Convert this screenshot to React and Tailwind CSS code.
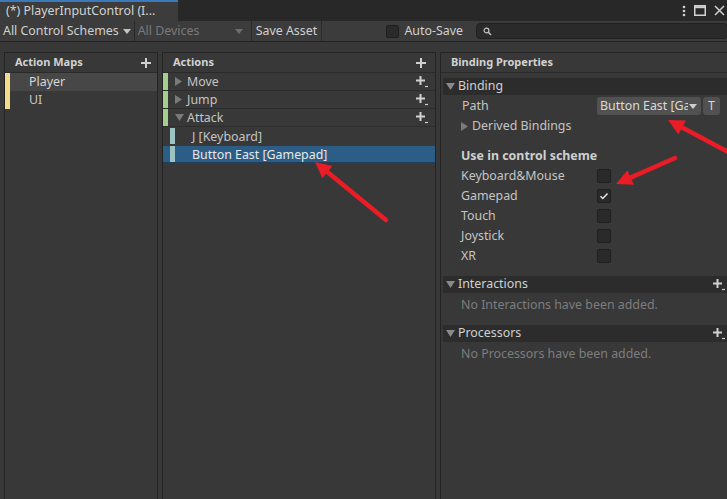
import React from 'react';

// little "+" with a dropdown notch, used on action rows and section headers
const PlusMenu = () => (
  <svg width="14" height="14" viewBox="0 0 14 14" className="shrink-0">
    <path d="M5.5 1v9M1 5.5h9" stroke="#d0d0d0" strokeWidth="2" />
    <path d="M10 11.5h3" stroke="#d0d0d0" strokeWidth="1.2" />
  </svg>
);

const Plus = () => (
  <svg width="12" height="12" viewBox="0 0 12 12" className="shrink-0">
    <path d="M6 1v10M1 6h10" stroke="#d0d0d0" strokeWidth="2" />
  </svg>
);

const TriRight = () => (
  <svg width="7" height="9" viewBox="0 0 7 9" className="shrink-0">
    <path d="M0 0l7 4.5L0 9z" fill="#7a7a7a" />
  </svg>
);

const TriDown = ({ color = '#7a7a7a' }) => (
  <svg width="9" height="7" viewBox="0 0 9 7" className="shrink-0">
    <path d="M0 0h9L4.5 7z" fill={color} />
  </svg>
);

const Check = ({ checked }) => (
  <div className="w-[14px] h-[14px] rounded-[2px] bg-[#2a2a2a] border border-[#1f1f1f] flex items-center justify-center">
    {checked && (
      <svg width="10" height="10" viewBox="0 0 10 10">
        <path d="M1.5 5.2l2.3 2.3L8.5 2.5" stroke="#e6e6e6" strokeWidth="1.5" fill="none" />
      </svg>
    )}
  </div>
);

// red annotation arrow (tail -> tip)
const Arrow = ({ x1, y1, x2, y2 }) => {
  const dx = x2 - x1, dy = y2 - y1;
  const len = Math.hypot(dx, dy);
  const ux = dx / len, uy = dy / len;
  const hl = 16, hw = 8;
  const bx = x2 - ux * hl, by = y2 - uy * hl;
  const pts = `${x2},${y2} ${bx - uy * hw},${by + ux * hw} ${bx + uy * hw},${by - ux * hw}`;
  return (
    <g>
      <line x1={x1} y1={y1} x2={bx + ux * 2} y2={by + uy * 2} stroke="#ea1c26" strokeWidth="4.5" strokeLinecap="round" />
      <polygon points={pts} fill="#ea1c26" />
    </g>
  );
};

const ActionRow = ({ name, open }) => (
  <div className="h-[18px] flex items-center border-b border-[#2d2d2d]">
    <div className="w-[5px] h-full bg-[#a3cf8b]" />
    <div className="w-[7px]" />
    {open ? <TriDown /> : <TriRight />}
    <span className={`pt-[2px] ${open ? 'ml-[3px]' : 'ml-[5px]'}`}>{name}</span>
    <div className="flex-1" />
    <div className="mr-[6px]"><PlusMenu /></div>
  </div>
);

const BindingRow = ({ name, selected }) => (
  <div className={`h-[18px] flex items-center ${selected ? 'bg-[#2c5d87] border-y border-[#1f3f5c] text-[#e8e8e8]' : ''}`}>
    <div className="w-[7px]" />
    <div className="w-[5px] h-[16px] bg-[#9dc2c2]" />
    <span className="ml-[17px] pt-[2px]">{name}</span>
  </div>
);

const SectionHeader = ({ title, plus }) => (
  <div className="h-[17px] flex items-center bg-[#2c2c2c] ml-[2px]">
    <div className="ml-[3px]"><TriDown color="#8a8a8a" /></div>
    <span className="ml-[3px] text-[#d0d0d0]">{title}</span>
    <div className="flex-1" />
    {plus && <div className="mr-[5px]"><PlusMenu /></div>}
  </div>
);

export default function App() {
  const schemes = [
    { name: 'Keyboard&Mouse', checked: false },
    { name: 'Gamepad', checked: true },
    { name: 'Touch', checked: false },
    { name: 'Joystick', checked: false },
    { name: 'XR', checked: false },
  ];

  return (
    <div className="relative w-[727px] h-[499px] overflow-hidden bg-[#383838] text-[12.4px] text-[#c4c4c4] font-['Noto_Sans',sans-serif] flex flex-col">
      {/* tab bar */}
      <div className="h-[21px] bg-[#282828] flex items-stretch shrink-0">
        <div className="w-[178px] bg-[#3c3c3c] border-t-2 border-[#3a79bb] pl-[6px] leading-[18px] text-[#d2d2d2]">
          (*) PlayerInputControl (I...
        </div>
        <div className="flex-1" />
        <div className="flex items-center gap-[8px] pr-[2px] text-[#d0d0d0]">
          <svg width="4" height="12" viewBox="0 0 4 12"><circle cx="2" cy="2" r="1.3" fill="#d0d0d0" /><circle cx="2" cy="6" r="1.3" fill="#d0d0d0" /><circle cx="2" cy="10" r="1.3" fill="#d0d0d0" /></svg>
          <svg width="12" height="11" viewBox="0 0 12 11"><rect x="0.75" y="0.75" width="10.5" height="9.5" fill="none" stroke="#d0d0d0" strokeWidth="1.5" /><path d="M0.75 2.2h10.5" stroke="#d0d0d0" strokeWidth="2" /></svg>
          <svg width="11" height="11" viewBox="0 0 11 11"><path d="M1 1l9 9M10 1l-9 9" stroke="#d0d0d0" strokeWidth="1.5" /></svg>
        </div>
      </div>

      {/* toolbar */}
      <div className="h-[21px] bg-[#3c3c3c] border-b border-[#232323] flex items-stretch shrink-0 text-[#d0d0d0]">
        <div className="flex items-center pl-[3px] pr-[3px] border-r border-[#2a2a2a]">
          <span>All Control Schemes</span>
          <div className="ml-[4px]"><svg width="8" height="5" viewBox="0 0 8 5"><path d="M0 0h8L4 5z" fill="#c4c4c4" /></svg></div>
        </div>
        <div className="w-[117px] flex items-center pl-[3px] pr-[8px] border-r border-[#2a2a2a] text-[#7a7a7a]">
          <span>All Devices</span>
          <div className="flex-1" />
          <svg width="8" height="5" viewBox="0 0 8 5"><path d="M0 0h8L4 5z" fill="#6e6e6e" /></svg>
        </div>
        <div className="flex items-center px-[4px] border-r border-[#2a2a2a]">Save Asset</div>
        <div className="flex-1" />
        <div className="flex items-center">
          <div className="w-[13px] h-[13px] rounded-[2px] bg-[#2a2a2a] border border-[#1f1f1f]" />
          <span className="ml-[5px]">Auto-Save</span>
        </div>
        <div className="w-[252px] ml-[13px] my-[2px] -mr-[1px] rounded-[4px] bg-[#2a2a2a] border border-[#212121] flex items-center pl-[6px]">
          <svg width="9" height="9" viewBox="0 0 9 9"><circle cx="3.5" cy="3.5" r="2.4" fill="none" stroke="#c4c4c4" strokeWidth="1.2" /><path d="M5.3 5.3L8 8" stroke="#c4c4c4" strokeWidth="1.5" /></svg>
        </div>
      </div>

      {/* panels */}
      <div className="flex-1 flex gap-[4px] pl-[4px] pt-[10px]">
        {/* action maps */}
        <div className="w-[154px] shrink-0 border-x border-t border-[#232323] flex flex-col">
          <div className="h-[20px] flex items-center border-b border-[#2a2a2a] pl-[10px] pr-[5px] font-bold text-[11px] text-[#d2d2d2]">
            <span>Action Maps</span>
            <div className="flex-1" />
            <Plus />
          </div>
          <div className="h-[18px] flex items-center bg-[#474747]">
            <div className="w-[5px] h-full bg-[#f2dc8b]" />
            <span className="ml-[19px] text-[#d6d6d6]">Player</span>
          </div>
          <div className="h-[18px] flex items-center">
            <div className="w-[5px] h-full bg-[#f2dc8b]" />
            <span className="ml-[19px]">UI</span>
          </div>
        </div>

        {/* actions */}
        <div className="w-[274px] shrink-0 border-x border-t border-[#232323] flex flex-col">
          <div className="h-[20px] flex items-center border-b border-[#2a2a2a] pl-[10px] pr-[8px] font-bold text-[11px] text-[#d2d2d2]">
            <span>Actions</span>
            <div className="flex-1" />
            <Plus />
          </div>
          <ActionRow name="Move" />
          <ActionRow name="Jump" />
          <ActionRow name="Attack" open />
          <BindingRow name="J [Keyboard]" />
          <BindingRow name="Button East [Gamepad]" selected />
        </div>

        {/* binding properties */}
        <div className="w-[292px] shrink-0 border-x border-t border-[#232323] flex flex-col">
          <div className="h-[20px] flex items-center border-b border-[#2a2a2a] pl-[10px] font-bold text-[11px] text-[#d2d2d2]">
            Binding Properties
          </div>
          <div className="mt-[5px]">
            <SectionHeader title="Binding" />
          </div>
          <div className="flex items-center h-[20px] mt-[1px] pl-[21px]">
            <span className="w-[135px]">Path</span>
            <div className="w-[104px] h-[18px] rounded-[3px] bg-[#515151] flex items-center pl-[3px] pr-[4px] text-[#dadada]">
              <span className="w-[89px] whitespace-nowrap overflow-hidden">Button East [Gamepad]</span>
              <svg width="8" height="5" viewBox="0 0 8 5" className="ml-[1px] shrink-0"><path d="M0 0h8L4 5z" fill="#d0d0d0" /></svg>
            </div>
            <div className="w-[17px] h-[18px] ml-[2px] rounded-[3px] bg-[#515151] flex items-center justify-center text-[#dadada]">T</div>
          </div>
          <div className="flex items-center h-[20px] pl-[20px]">
            <TriRight />
            <span className="ml-[4px]">Derived Bindings</span>
          </div>
          <div className="h-[20px] mt-[10px] flex items-center pl-[20px] font-bold text-[#cfcfcf]">Use in control scheme</div>
          {schemes.map((s) => (
            <div key={s.name} className="h-[20px] flex items-center pl-[20px]">
              <span className="w-[136px]">{s.name}</span>
              <Check checked={s.checked} />
            </div>
          ))}
          <div className="mt-[10px]">
            <SectionHeader title="Interactions" plus />
          </div>
          <div className="h-[20px] mt-[2px] flex items-center pl-[20px] text-[#7d7d7d]">No Interactions have been added.</div>
          <div className="mt-[10px]">
            <SectionHeader title="Processors" plus />
          </div>
          <div className="h-[20px] mt-[2px] flex items-center pl-[20px] text-[#7d7d7d]">No Processors have been added.</div>
        </div>
      </div>

      {/* annotation arrows */}
      <svg className="absolute inset-0 pointer-events-none" width="727" height="499">
        <Arrow x1={386} y1={220} x2={315} y2={162} />
        <Arrow x1={730} y1={153} x2={668} y2={120} />
        <Arrow x1={675} y1={158} x2={616} y2={184} />
      </svg>
    </div>
  );
}
